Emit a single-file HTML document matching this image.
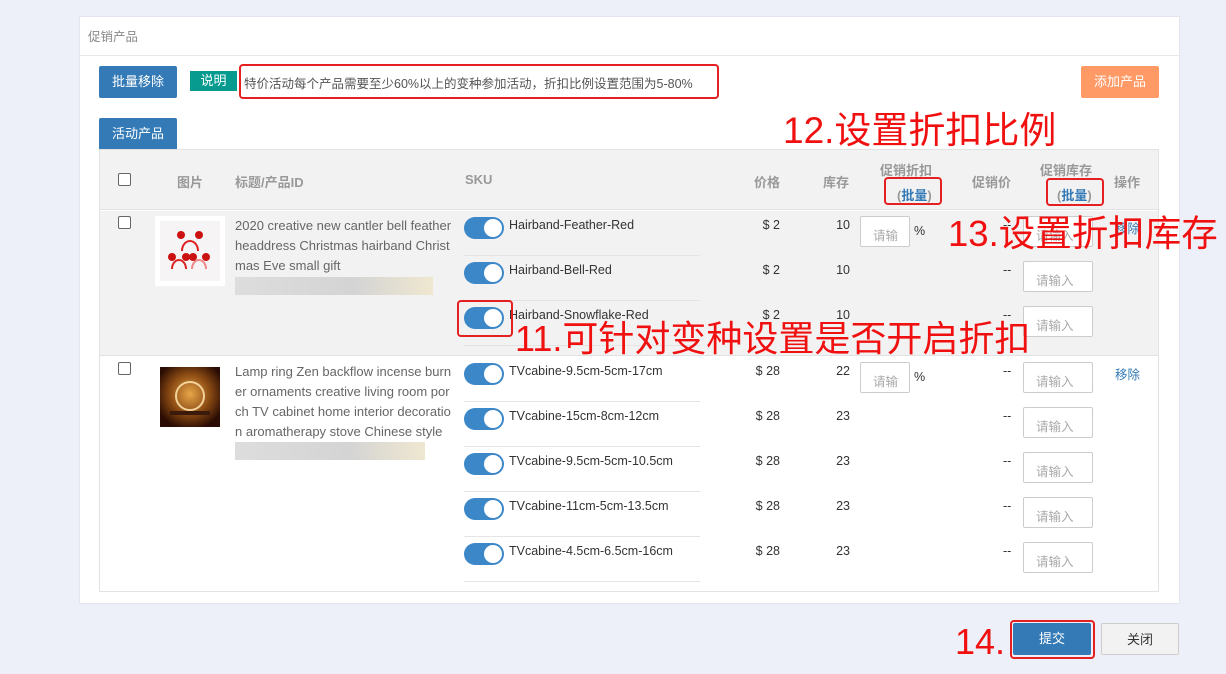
<!DOCTYPE html>
<html><head><meta charset="utf-8"><style>
*{box-sizing:border-box;margin:0;padding:0}
body{width:1226px;height:674px;background:#edf0f8;font-family:"Liberation Sans","Noto Sans CJK SC",sans-serif;font-size:12px;color:#555;position:relative;overflow:hidden}
.a{position:absolute}
.panel{left:79px;top:16px;width:1101px;height:588px;background:#fff;border:1px solid #e3e6ee}
.btn{position:absolute;color:#fff;text-align:center;border-radius:2px;font-size:13px}
.cb{position:absolute;width:13px;height:13px;border:1px solid #666;border-radius:2px;background:#fff}
.tg{position:absolute;width:40px;height:22px;border-radius:11px;background:#3c87c8}
.tg:after{content:"";position:absolute;right:2px;top:2px;width:18px;height:18px;border-radius:50%;background:#fff}
.sku{position:absolute;left:509px;font-size:12.5px;color:#333}
.ln{position:absolute;left:464px;width:236px;height:1px;background:#e4e4e4}
.num{position:absolute;font-size:12.5px;color:#333;text-align:right}
.in{position:absolute;height:31px;border:1px solid #ccc;background:#fff;color:#aaa;font-size:12.5px;padding:8px 0 0 12px;border-radius:2px}
.red{position:absolute;color:#f01010;line-height:1;white-space:nowrap}
.rb{position:absolute;border:2px solid #e52020;border-radius:4px}
.hd{position:absolute;font-weight:bold;color:#999;font-size:13px}
.tt{position:absolute;left:235px;width:218px;font-size:13px;line-height:20px;color:#666;word-break:break-all}
.blur{position:absolute;height:18px;background:linear-gradient(90deg,#ddd,#d4d4d4 60%,#efe7d0)}
</style></head><body>
<div class="a panel"></div>
<div class="a" style="left:79px;top:55px;width:1101px;height:1px;background:#e8e8e8"></div>
<div class="a" style="left:88px;top:26px;font-size:12.5px;color:#888">促销产品</div>
<div class="btn" style="left:99px;top:66px;width:78px;height:32px;line-height:32px;background:#337ab7">批量移除</div>
<div class="btn" style="left:190px;top:71px;width:47px;height:20px;line-height:20px;background:#079b8f;border-radius:0">说明</div>
<div class="a" style="left:244px;top:73px;font-size:12.5px;color:#555">特价活动每个产品需要至少60%以上的变种参加活动，折扣比例设置范围为5-80%</div>
<div class="rb" style="left:239px;top:64px;width:480px;height:35px"></div>
<div class="btn" style="left:1081px;top:66px;width:78px;height:32px;line-height:32px;background:#ff9966">添加产品</div>
<div class="btn" style="left:99px;top:118px;width:78px;height:31px;line-height:31px;background:#337ab7;border-radius:2px 2px 0 0">活动产品</div>

<div class="a" style="left:99px;top:149px;width:1060px;height:443px;border:1px solid #e2e2e2;background:#fff"></div>
<div class="a" style="left:100px;top:150px;width:1058px;height:60px;background:#f2f2f2;border-bottom:1px solid #e2e2e2"></div>
<div class="a" style="left:100px;top:211px;width:1058px;height:145px;background:#f2f2f2;border-bottom:1px solid #e2e2e2"></div>

<div class="cb" style="left:118px;top:173px"></div>
<div class="hd" style="left:177px;top:172px">图片</div>
<div class="hd" style="left:235px;top:172px">标题/产品ID</div>
<div class="hd" style="left:465px;top:172px">SKU</div>
<div class="hd" style="left:754px;top:172px">价格</div>
<div class="hd" style="left:823px;top:172px">库存</div>
<div class="hd" style="left:880px;top:160px">促销折扣</div>
<div class="hd" style="left:897px;top:185px"><span>(</span><span style="color:#337ab7">批量</span>)</div>
<div class="rb" style="left:884px;top:177px;width:58px;height:28px"></div>
<div class="hd" style="left:972px;top:172px">促销价</div>
<div class="hd" style="left:1040px;top:160px">促销库存</div>
<div class="hd" style="left:1057px;top:185px">(<span style="color:#337ab7">批量</span>)</div>
<div class="rb" style="left:1046px;top:178px;width:58px;height:28px"></div>
<div class="hd" style="left:1114px;top:172px">操作</div>

<!-- row1 -->
<div class="cb" style="left:118px;top:216px"></div>
<div class="a" style="left:155px;top:216px;width:70px;height:70px;background:#fff;padding:5px"><svg width="60" height="60" viewBox="0 0 60 60"><rect width="60" height="60" fill="#f6f4f5"/><g fill="none" stroke="#d22" stroke-width="2"><path d="M22 30a8 10 0 0 1 16 0"/><path d="M12 48a7 9 0 0 1 14 0"/><path d="M32 48a7 9 0 0 1 14 0" stroke="#e88"/></g><g fill="#c11"><circle cx="21" cy="14" r="4"/><circle cx="39" cy="14" r="4"/><circle cx="12" cy="36" r="4"/><circle cx="26" cy="36" r="4"/><circle cx="33" cy="36" r="4"/><circle cx="46" cy="36" r="4"/></g></svg></div>
<div class="tt" style="top:216px">2020 creative new cantler bell feather headdress Christmas hairband Christmas Eve small gift</div>
<div class="blur" style="left:235px;top:277px;width:198px"></div>
<div class="tg" style="left:464px;top:217px"></div><div class="sku" style="top:218px">Hairband-Feather-Red</div>
<div class="ln" style="top:255px"></div>
<div class="tg" style="left:464px;top:262px"></div><div class="sku" style="top:263px">Hairband-Bell-Red</div>
<div class="ln" style="top:300px"></div>
<div class="tg" style="left:464px;top:307px"></div><div class="sku" style="top:308px">Hairband-Snowflake-Red</div>
<div class="rb" style="left:457px;top:300px;width:56px;height:37px"></div>
<div class="ln" style="top:345px"></div>
<div class="num" style="left:740px;width:40px;top:218px">$ 2</div><div class="num" style="left:810px;width:40px;top:218px">10</div>
<div class="num" style="left:740px;width:40px;top:263px">$ 2</div><div class="num" style="left:810px;width:40px;top:263px">10</div>
<div class="num" style="left:740px;width:40px;top:308px">$ 2</div><div class="num" style="left:810px;width:40px;top:308px">10</div>
<div class="in" style="left:860px;top:216px;width:50px">请输</div><div class="num" style="left:914px;top:224px">%</div>
<div class="num" style="left:1003px;top:218px">--</div>
<div class="in" style="left:1023px;top:216px;width:70px">请输入</div>
<div class="num" style="left:1003px;top:263px">--</div>
<div class="in" style="left:1023px;top:261px;width:70px">请输入</div>
<div class="num" style="left:1003px;top:308px">--</div>
<div class="in" style="left:1023px;top:306px;width:70px">请输入</div>
<div class="a" style="left:1115px;top:218px;color:#337ab7;font-size:12.5px">移除</div>

<!-- row2 -->
<div class="cb" style="left:118px;top:362px"></div>
<div class="a" style="left:160px;top:367px;width:60px;height:60px;background:radial-gradient(circle at 50% 45%,#e8a64a 0,#8a4a12 45%,#2a0c04 80%)"><div class="a" style="left:15px;top:14px;width:30px;height:30px;border:2px solid #f3d29a;border-radius:50%"></div><div class="a" style="left:10px;top:44px;width:40px;height:4px;background:#3a1a0a"></div></div>
<div class="tt" style="top:362px">Lamp ring Zen backflow incense burner ornaments creative living room porch TV cabinet home interior decoration aromatherapy stove Chinese style</div>
<div class="blur" style="left:235px;top:442px;width:190px"></div>
<div class="tg" style="left:464px;top:363px"></div><div class="sku" style="top:364px">TVcabine-9.5cm-5cm-17cm</div>
<div class="ln" style="top:401px"></div>
<div class="tg" style="left:464px;top:408px"></div><div class="sku" style="top:409px">TVcabine-15cm-8cm-12cm</div>
<div class="ln" style="top:446px"></div>
<div class="tg" style="left:464px;top:453px"></div><div class="sku" style="top:454px">TVcabine-9.5cm-5cm-10.5cm</div>
<div class="ln" style="top:491px"></div>
<div class="tg" style="left:464px;top:498px"></div><div class="sku" style="top:499px">TVcabine-11cm-5cm-13.5cm</div>
<div class="ln" style="top:536px"></div>
<div class="tg" style="left:464px;top:543px"></div><div class="sku" style="top:544px">TVcabine-4.5cm-6.5cm-16cm</div>
<div class="ln" style="top:581px"></div>
<div class="num" style="left:740px;width:40px;top:364px">$ 28</div><div class="num" style="left:810px;width:40px;top:364px">22</div>
<div class="num" style="left:740px;width:40px;top:409px">$ 28</div><div class="num" style="left:810px;width:40px;top:409px">23</div>
<div class="num" style="left:740px;width:40px;top:454px">$ 28</div><div class="num" style="left:810px;width:40px;top:454px">23</div>
<div class="num" style="left:740px;width:40px;top:499px">$ 28</div><div class="num" style="left:810px;width:40px;top:499px">23</div>
<div class="num" style="left:740px;width:40px;top:544px">$ 28</div><div class="num" style="left:810px;width:40px;top:544px">23</div>
<div class="in" style="left:860px;top:362px;width:50px">请输</div><div class="num" style="left:914px;top:370px">%</div>
<div class="num" style="left:1003px;top:364px">--</div><div class="in" style="left:1023px;top:362px;width:70px">请输入</div>
<div class="num" style="left:1003px;top:409px">--</div><div class="in" style="left:1023px;top:407px;width:70px">请输入</div>
<div class="num" style="left:1003px;top:454px">--</div><div class="in" style="left:1023px;top:452px;width:70px">请输入</div>
<div class="num" style="left:1003px;top:499px">--</div><div class="in" style="left:1023px;top:497px;width:70px">请输入</div>
<div class="num" style="left:1003px;top:544px">--</div><div class="in" style="left:1023px;top:542px;width:70px">请输入</div>
<div class="a" style="left:1115px;top:364px;color:#337ab7;font-size:12.5px">移除</div>

<div class="btn" style="left:1013px;top:623px;width:78px;height:32px;line-height:32px;background:#337ab7">提交</div>
<div class="rb" style="left:1010px;top:620px;width:85px;height:39px"></div>
<div class="btn" style="left:1101px;top:623px;width:78px;height:32px;line-height:32px;background:#f2f2f2;border:1px solid #ccc;color:#333">关闭</div>

<div class="red" style="left:783px;top:112px;font-size:37px">12.设置折扣比例</div>
<div class="red" style="left:948px;top:216px;font-size:36.5px">13.设置折扣库存</div>
<div class="red" style="left:515px;top:321px;font-size:36px">11.可针对变种设置是否开启折扣</div>
<div class="red" style="left:955px;top:624px;font-size:36px">14.</div>
</body></html>
